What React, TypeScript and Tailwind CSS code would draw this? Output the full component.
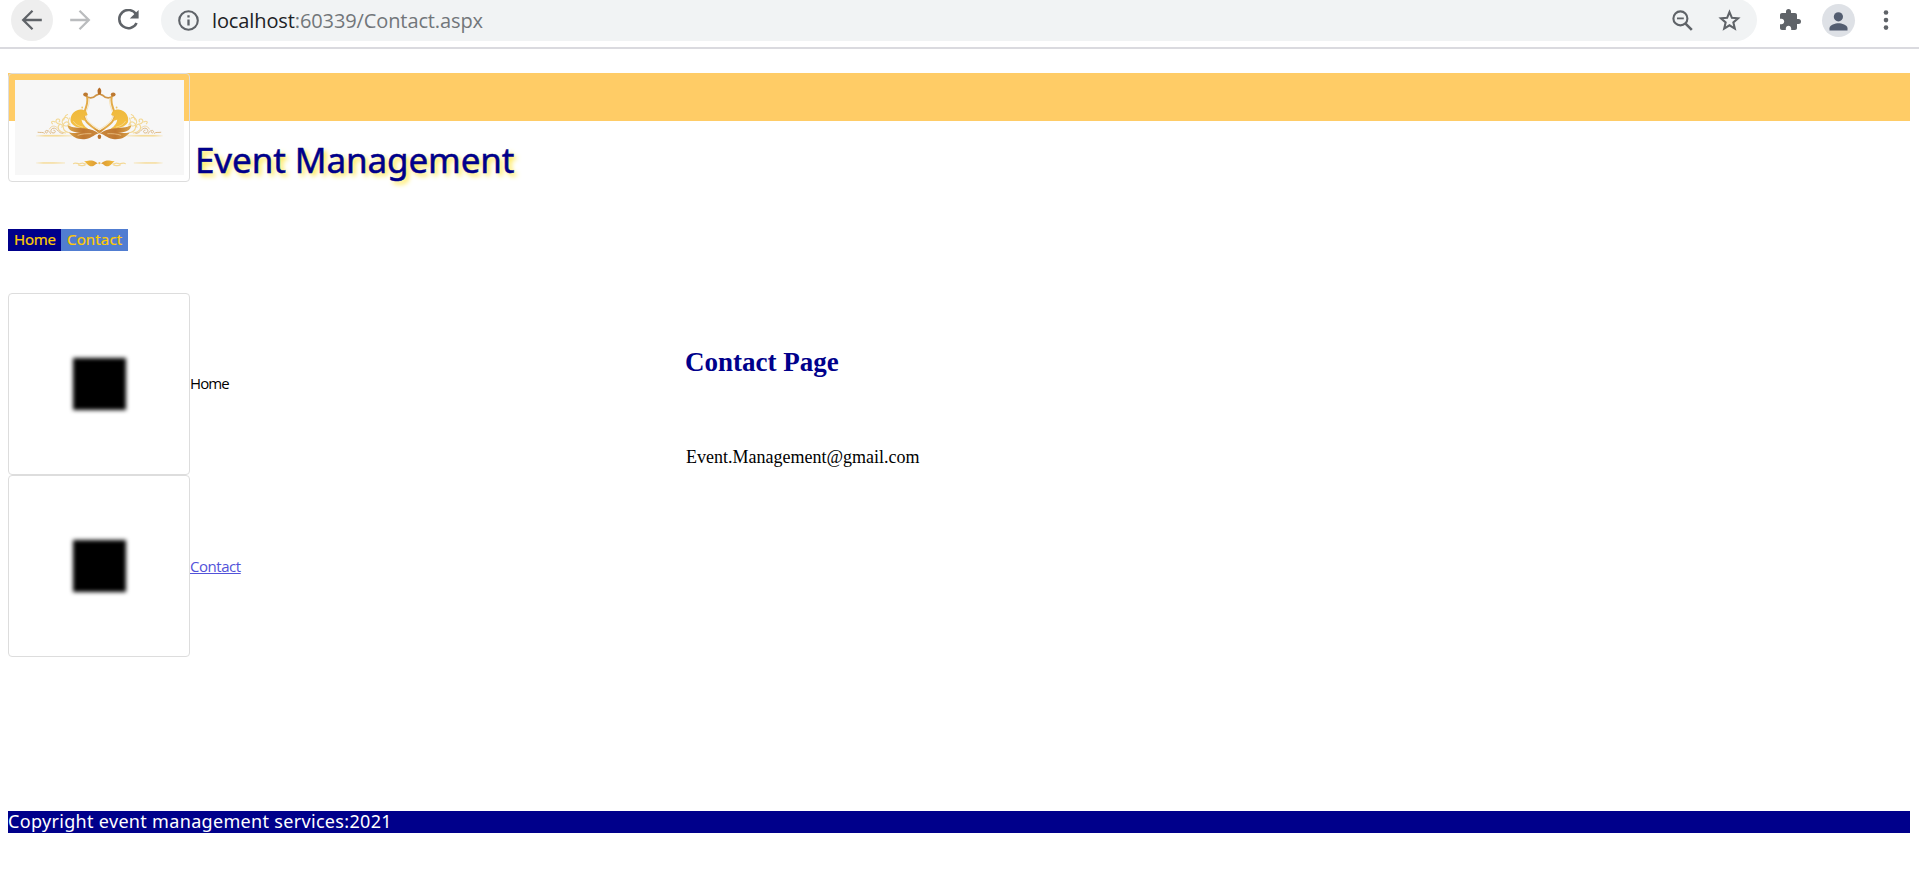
function LogoHalf() {
  return (
    <g fill="none" strokeLinecap="round">
      <path d="M70.8 15.5C73 18.8 78 18.6 81 15.4C82.8 14.6 84 14 84.4 13.4" stroke="#cf9548" strokeWidth="1.8" />
      <path d="M72.2 17.5C73.2 23 71 27 69.4 32C67.4 40 73 44.5 84.4 51.8" stroke="#e3ab48" strokeWidth="2" />
      <path d="M74.4 19C74.8 24 72.4 28 71.2 32.5C69.8 40 75.4 44 84.4 49.4" stroke="#f6e0ae" strokeWidth="0.8" />
      <ellipse cx="70.6" cy="14.6" rx="2.4" ry="2" fill="#bd7a32" />
      <path
        d="M72.600 35C71.800 30 66.500 28.600 62.200 30.200C56.400 32.400 54.600 38.600 56 42.600C58.400 47 65 48.600 75 49.800C70.400 47.400 66.800 43.600 66.600 39.400C68 41 70.400 40.800 71 39.400C69.600 38.600 68.800 37.600 68.900 36.400C70 36 71.200 35.800 72.600 35Z"
        fill="url(#swan)"
      />
      <path d="M58.500 41.500C60.500 44.600 63.500 46.200 67.500 47" stroke="#f8dc92" strokeWidth="0.8" />
      <circle cx="67.2" cy="27.5" r="0.9" fill="#efc566" />
      <path d="M52.400 44.400C57 48.400 64 47.200 71 48.400C76 49.200 80.500 50.800 84 53.600C80.400 54 77.200 58 71 59C63 60 57.600 57 53.600 52.200C58 53.400 62 53.200 66 52.600C59.500 52.400 52.600 51 52.400 44.400Z" fill="url(#leaf)" />
      <path d="M63 55.200C67 53.800 72 53.500 76 53.700" stroke="#f3cf94" strokeWidth="0.7" />
      <path d="M84.4 50.500L79 48.500L84.4 53.500Z" fill="#cf8b39" />
      <path d="M53.5 52.5C47 51.5 46.8 43.5 51 42C54.5 41 54.5 46 51.5 46C48.5 46.5 46 43.5 47.5 40C48.6 37.5 51.6 36.6 52.8 38.4" stroke="#f3d894" strokeWidth="1.1" />
      <path d="M50.5 53C44 52 41.500 48 44 45C46 43.200 48.500 45.600 46.800 47.200M45.500 44C41 44.500 39.500 40 42.600 39C44.600 38.600 45.600 41 44 42M40 42C37 40 35.500 42.500 37.500 43.800M52.500 34.500C49 35.500 50 38.500 48.500 40M54.500 38C52.500 41 54 44 55 45" stroke="#f3d894" strokeWidth="1.1" />
      <path d="M48 53.3C43.5 53.6 43 49 39.5 48.2C35.6 47.6 34.6 52.6 38 53C41 53.2 41 50 38.8 50.2M35.5 53.4C34 49.6 29.6 49.6 30.4 52.3C31 53.6 33 53 32.5 51.8M29.4 53.2C28 51.8 25.8 52.8 23 52.3" stroke="#dfbb88" strokeWidth="1" />
      <path d="M34.5 49C36.5 45 40 45.6 42 47.5" stroke="#efd093" strokeWidth="0.9" />
      <rect x="21" y="54.900" width="36" height="1.700" fill="url(#rule)" />
      <rect x="21" y="82.200" width="29" height="1.500" fill="url(#rule)" />
      <path d="M58.5 83.6C61 81.6 63 85 66 83.4C68 82.2 69 84.2 71 84M63.5 85C66 86.4 68 85.500 70 85.200" stroke="#f3d896" strokeWidth="1.2" />
      <path d="M69.2 81C72 81.600 74.500 80 78 80.800C80.800 81.600 82 83 82.800 83.400C80.400 83.200 79.800 85.800 77.400 86.200C73.800 86.800 72 83.600 69.200 81Z" fill="url(#bud)" />
    </g>
  );
}

function LogoPicture() {
  return (
    <svg width="169" height="95" viewBox="0 0 169 95" className="block bg-[#f7f7f7]" aria-hidden="true">
      <defs>
        <linearGradient id="rule">
          <stop offset="0" stopColor="#f5dc9c" stopOpacity="0.2" />
          <stop offset="0.25" stopColor="#f5dc9c" />
          <stop offset="0.6" stopColor="#f5dc9c" />
          <stop offset="1" stopColor="#f5dc9c" stopOpacity="0.4" />
        </linearGradient>
        <linearGradient id="swan" x1="0" y1="0" x2="0" y2="1">
          <stop offset="0" stopColor="#efb93c" />
          <stop offset="1" stopColor="#f5c146" />
        </linearGradient>
        <linearGradient id="leaf">
          <stop offset="0" stopColor="#dba449" />
          <stop offset="0.5" stopColor="#bf7831" />
          <stop offset="1" stopColor="#cc8a3e" />
        </linearGradient>
        <linearGradient id="bud">
          <stop offset="0" stopColor="#f2bc3c" />
          <stop offset="1" stopColor="#dc9a34" />
        </linearGradient>
      </defs>
      <LogoHalf />
      <g transform="translate(168.8 0) scale(-1 1)">
        <LogoHalf />
      </g>
      <path d="M84.4 7.6C86.8 9.4 86.6 11.6 85.6 14.5H83.2C82.2 11.6 82 9.400 84.4 7.600Z" fill="#b66e28" />
      <ellipse cx="84.4" cy="56.8" rx="1.8" ry="2.2" fill="#b9722d" />
      <circle cx="84.4" cy="83.2" r="1.1" fill="#f0c060" />
    </svg>
  );
}

function Toolbar() {
  return (
    <header className="flex h-[49px] items-start border-b-2 border-[#dadadf] bg-white pl-[11px] text-[#5f6368]">
      <div className="-mt-px flex h-[42px] w-[42px] shrink-0 items-center justify-center rounded-full bg-[#eeeeee]">
        <svg width="22" height="22" viewBox="0 0 22 22" fill="none" stroke="#5f6368" strokeWidth="2.3" className="-mt-px">
          <path d="M20.8 11H2.5M11.5 1.8L2.2 11L11.5 20.2" />
        </svg>
      </div>
      <div className="-mt-px ml-4 flex h-[42px] w-[22px] shrink-0 items-center justify-center">
        <svg width="22" height="22" viewBox="0 0 22 22" fill="none" stroke="#babcbe" strokeWidth="2.3" className="-mt-px">
          <path d="M1.2 11H19.5M10.5 1.8L19.8 11L10.5 20.2" />
        </svg>
      </div>
      <div className="-mt-px ml-[26px] flex h-[42px] w-[23px] shrink-0 items-center justify-center">
        <svg width="23" height="22" viewBox="0 0 23 22" fill="none">
          <path d="M19.3 5.6A9.1 9.1 0 1 0 19.6 14" stroke="#5f6368" strokeWidth="2.5" />
          <path d="M21.6 1V9.6H12.8Z" fill="#5f6368" />
        </svg>
      </div>
      <div className="-mt-px ml-[21px] flex h-[42px] w-[1596px] shrink-0 items-center rounded-full bg-[#f1f3f4] pl-[17px] pr-3.5">
        <svg width="21" height="21" viewBox="0 0 21 21" fill="none" className="mt-px">
          <circle cx="10.5" cy="10.5" r="9.3" stroke="#5f6368" strokeWidth="2.1" />
          <path d="M10.5 9.4V15.4M10.5 5.3V7.6" stroke="#5f6368" strokeWidth="2.3" />
        </svg>
        <span className="ml-[13px] mt-0.5 grow text-[20px] leading-[28px] tracking-[-0.11px] text-[#72767a]">
          <span className="text-[#202124]">localhost</span>:60339/Contact.aspx
        </span>
        <svg width="21" height="21" viewBox="0 0 21 21" fill="none" stroke="#5f6368">
          <circle cx="8.4" cy="8.4" r="7" strokeWidth="2.1" />
          <path d="M5 8.4H11.8" strokeWidth="1.8" />
          <path d="M13.3 13.3L19.8 19.8" strokeWidth="2.6" />
        </svg>
        <svg width="25" height="25" viewBox="0.300 0 24 24" fill="none" stroke="#5f6368" strokeWidth="2" className="ml-6 mr-px">
          <path d="M12.300 3.900L14.600 9.400L20.500 9.900L16 13.800L17.400 19.700L12.300 16.600L7.200 19.700L8.600 13.800L4.100 9.900L10 9.400Z" />
        </svg>
      </div>
      <svg width="24" height="24" viewBox="0 0 24 24" fill="#5f6368" className="ml-[21px] mt-2 shrink-0">
        <path d="M20.5 11H19V7c0-1.1-.9-2-2-2h-4V3.500a2.500 2.500 0 0 0-5 0V5H4c-1.100 0-1.990.9-1.990 2v3.800H3.500c1.490 0 2.700 1.210 2.700 2.700s-1.210 2.700-2.700 2.700H2V20c0 1.100.9 2 2 2h3.800v-1.500c0-1.490 1.210-2.700 2.700-2.700 1.490 0 2.700 1.210 2.700 2.700V22H17c1.100 0 2-.9 2-2v-4h1.500a2.500 2.500 0 0 0 0-5z" />
      </svg>
      <div className="ml-5 mt-1 flex h-[33px] w-[33px] shrink-0 items-center justify-center rounded-full bg-[#dee1e6]">
        <svg width="19" height="19" viewBox="0 0 19 19" fill="#535d70" className="mt-px">
          <circle cx="9.400" cy="4.800" r="4.600" />
          <path d="M0.500 18.500V16.300C0.500 12.800 6.400 11.300 9.500 11.300S18.500 12.800 18.500 16.300V18.500Z" />
        </svg>
      </div>
      <svg width="6" height="22" viewBox="0 0 6 22" fill="#5f6368" className="ml-[28px] mt-[9px] shrink-0">
        <circle cx="3" cy="3.500" r="2.300" />
        <circle cx="3" cy="11.100" r="2.300" />
        <circle cx="3" cy="18.600" r="2.300" />
      </svg>
    </header>
  );
}

function Thumbnail() {
  return (
    <div className="flex h-[182px] w-[182px] items-center justify-center rounded border border-[#dddddd]">
      <div className="ml-px h-[52px] w-[53px] bg-black blur-[2px]" />
    </div>
  );
}

export default function App() {
  return (
    <div className="flex min-h-[873px] flex-col bg-white font-['Open_Sans',sans-serif]">
      <Toolbar />
      <main className="mt-6 flex flex-col pl-2 pr-[9px]">
        <div className="flex h-[109px] bg-[linear-gradient(#ffcc66_48px,transparent_48px)]">
          <div className="h-[109px] w-[182px] shrink-0 rounded border border-[#dddddd] px-1.5 pt-1.5">
            <LogoPicture />
          </div>
          <h1 className="ml-[5px] mt-[62px] font-['Noto_Sans',sans-serif] text-[35px] leading-[49px] tracking-[-0.1px] text-[#00008b] [-webkit-text-stroke:0.5px_#00008b] [text-shadow:3px_3px_5px_#ffe430]">
            Event Management
          </h1>
        </div>

        <nav className="mt-[47px] flex h-[22px] font-['Noto_Sans',sans-serif] text-[15px] leading-[21px] text-[#ffcc00] [-webkit-text-stroke:0.2px_#ffcc00]">
          <a className="w-[53px] bg-[#00008b] pl-1.5 tracking-[-0.2px]">Home</a>
          <a className="w-[67px] bg-[#517dd1] pl-1.5 tracking-[0.15px]">Contact</a>
        </nav>

        <div className="mt-[42px] flex">
          <ul className="w-[678px] shrink-0 text-[15px] leading-5">
            <li className="flex items-center">
              <Thumbnail />
              <span className="-mt-0.5 tracking-[-0.9px] text-black">Home</span>
            </li>
            <li className="flex items-center">
              <Thumbnail />
              <a className="tracking-[-0.45px] text-[#5252d9] underline underline-offset-1">Contact</a>
            </li>
          </ul>
          <section className="font-['Liberation_Serif',serif]">
            <h2 className="-ml-px mt-[54px] text-[27px] font-bold leading-[31px] text-[#00008b]">Contact Page</h2>
            <p className="mt-[69px] text-[18px] leading-5 text-black">Event.Management@gmail.com</p>
          </section>
        </div>

        <footer className="mt-[154px] h-[22px] bg-[#00008b] font-['Noto_Sans',sans-serif] text-[18px] leading-[21px] tracking-[0.32px] text-white">
          Copyright event management services:2021
        </footer>
      </main>
    </div>
  );
}
